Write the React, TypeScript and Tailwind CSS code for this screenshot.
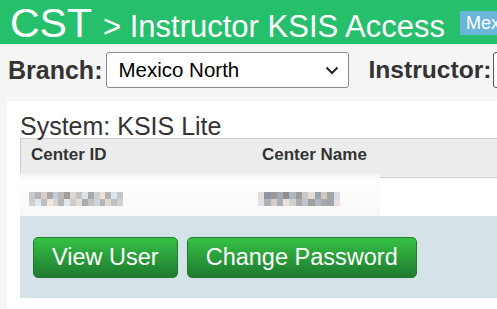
import React from "react";

const leftBlur = ["#c9c9c9","#b5b5b5","#d8d0c8","#a9a9a9","#c4ccd8","#b9b9b9","#9e9e9e","#e0d8d0","#c2c2c2","#d9e2ea","#a8a8a8","#cfcfcf","#ece2d8","#b3b3b3","#dbe4ec","#c6c6c6"];
const rightBlur = ["#e8dad0","#8e96a6","#9a9a9a","#a3aab8","#8f8f8f","#b0b8c4","#9d9d9d","#c8c8c8","#e6dcd2","#9aa0ae","#cfc7c0","#a5a5a5","#d8dde5"];

function Blur({ colors, w }: { colors: string[]; w: number }) {
  const cw = w / colors.length;
  return (
    <div className="flex flex-col h-[14px]">
      <div className="flex h-[7px]">
        {colors.map((c, i) => (
          <div key={i} style={{ width: cw, background: c }} />
        ))}
      </div>
      <div className="flex h-[7px]">
        {colors.slice().reverse().map((c, i) => (
          <div key={i} style={{ width: cw, background: c, opacity: 0.85 }} />
        ))}
      </div>
    </div>
  );
}

export default function App() {
  return (
    <div
      className="w-[497px] h-[309px] overflow-hidden bg-[#f5f5f5] text-[#333]"
      style={{ fontFamily: '"Liberation Sans", Arial, sans-serif' }}
    >
      {/* Header */}
      <div className="h-[44px] bg-[#26bf6c] flex items-baseline pl-[10px] pt-[1px] text-white whitespace-nowrap">
        <span className="text-[41px] leading-[1.1]">CST</span>
        <span className="text-[31px] leading-[1.1] ml-[11px]">&gt; Instructor KSIS Access</span>
        <span className="ml-[15px] self-start mt-[10px] h-[24px] bg-[#6bb5db] pl-[6px] pr-[6px] text-[18px] leading-[24px]">Mex</span>
      </div>

      {/* Branch row */}
      <div className="flex items-center pl-[8px] mt-[8px] h-[36px] whitespace-nowrap">
        <span className="text-[25px] font-bold leading-none text-[#333]">Branch:</span>
        <div className="ml-[4px] w-[243px] h-[36px] shrink-0 bg-white border border-[#8a8a8a] rounded-[3px] flex items-center pl-[11px] pr-[5px]">
          <span className="text-[20.5px] leading-none text-black flex-1">Mexico North</span>
          <svg width="14" height="9" viewBox="0 0 14 9" className="mr-[4px]">
            <path d="M1.5 1.5 L7 7 L12.5 1.5" fill="none" stroke="#222" strokeWidth="2" />
          </svg>
        </div>
        <span className="ml-[19px] text-[24.6px] font-bold leading-none text-[#333]">Instructor:</span>
        <div className="ml-[2px] w-[40px] h-[36px] shrink-0 bg-white border border-[#555] rounded-[3px]" />
      </div>

      {/* Panel */}
      <div className="ml-[7px] mt-[13px] bg-white h-[300px] pt-[13px]">
        <div className="pl-[13px] text-[25px] leading-none text-[#333] whitespace-nowrap">System: KSIS Lite</div>
        <div className="ml-[13px] -mt-[1px]">
          <div className="h-[40px] bg-[#ececec] border-t border-l border-b border-[#cfcfcf] flex pt-[7px] text-[17px] font-bold leading-none text-[#333] whitespace-nowrap">
            <div className="w-[230px] pl-[10px]">Center ID</div>
            <div className="pl-[11px]">Center Name</div>
          </div>
          <div className="relative h-[38px] bg-white">
            <div className="absolute left-0 top-[-5px] w-[360px] h-[43px] bg-gradient-to-b from-[#f3f3f3] via-white to-[#f8f8f8] from-[0%] via-[20%] to-[100%]">
              <div className="absolute left-[9px] top-[19px]">
                <Blur colors={leftBlur} w={94} />
              </div>
              <div className="absolute left-[238px] top-[19px]">
                <Blur colors={rightBlur} w={82} />
              </div>
            </div>
          </div>
          <div className="h-[82px] bg-[#d5e3e8] flex gap-[9px] pl-[13px] pt-[21px]">
            <button className="h-[41px] px-[18px] rounded-[5px] border border-[#1e7a2e] bg-gradient-to-b from-[#35c244] to-[#1f7a30] text-white text-[23.5px] leading-none whitespace-nowrap">
              View User
            </button>
            <button className="h-[41px] px-[18px] rounded-[5px] border border-[#1e7a2e] bg-gradient-to-b from-[#35c244] to-[#1f7a30] text-white text-[23.5px] leading-none whitespace-nowrap">
              Change Password
            </button>
          </div>
        </div>
      </div>
    </div>
  );
}
